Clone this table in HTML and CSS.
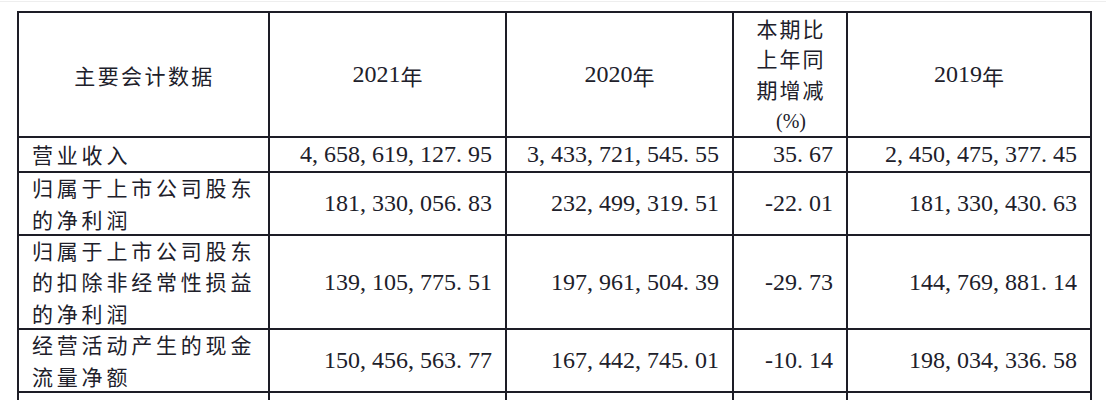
FILE: index.html
```html
<!DOCTYPE html>
<html lang="zh-CN">
<head>
<meta charset="utf-8">
<title>主要会计数据</title>
<link rel="stylesheet" href="styles.css">
</head>
<body>
<div class="page">
  <div class="sheet">
    <div class="c hd lab-hd">主要会计数据</div>
    <div class="c hd year">2021<span class="nian">年</span></div>
    <div class="c hd year">2020<span class="nian">年</span></div>
    <div class="c hd pct"><span>本期比<br>上年同<br>期增减<br><span class="pc">(%)</span></span></div>
    <div class="c hd year">2019<span class="nian">年</span></div>

    <div class="c lab">营业收入</div>
    <div class="c num">4<span class="p">,</span>658<span class="p">,</span>619<span class="p">,</span>127<span class="p">.</span>95</div>
    <div class="c num">3<span class="p">,</span>433<span class="p">,</span>721<span class="p">,</span>545<span class="p">.</span>55</div>
    <div class="c num">35<span class="p">.</span>67</div>
    <div class="c num">2<span class="p">,</span>450<span class="p">,</span>475<span class="p">,</span>377<span class="p">.</span>45</div>

    <div class="c lab">归属于上市公司股东<br>的净利润</div>
    <div class="c num">181<span class="p">,</span>330<span class="p">,</span>056<span class="p">.</span>83</div>
    <div class="c num">232<span class="p">,</span>499<span class="p">,</span>319<span class="p">.</span>51</div>
    <div class="c num"><span class="m">-</span>22<span class="p">.</span>01</div>
    <div class="c num">181<span class="p">,</span>330<span class="p">,</span>430<span class="p">.</span>63</div>

    <div class="c lab">归属于上市公司股东<br>的扣除非经常性损益<br>的净利润</div>
    <div class="c num">139<span class="p">,</span>105<span class="p">,</span>775<span class="p">.</span>51</div>
    <div class="c num">197<span class="p">,</span>961<span class="p">,</span>504<span class="p">.</span>39</div>
    <div class="c num"><span class="m">-</span>29<span class="p">.</span>73</div>
    <div class="c num">144<span class="p">,</span>769<span class="p">,</span>881<span class="p">.</span>14</div>

    <div class="c lab">经营活动产生的现金<br>流量净额</div>
    <div class="c num">150<span class="p">,</span>456<span class="p">,</span>563<span class="p">.</span>77</div>
    <div class="c num">167<span class="p">,</span>442<span class="p">,</span>745<span class="p">.</span>01</div>
    <div class="c num"><span class="m">-</span>10<span class="p">.</span>14</div>
    <div class="c num">198<span class="p">,</span>034<span class="p">,</span>336<span class="p">.</span>58</div>

    <div class="c tail"></div>
    <div class="c tail"></div>
    <div class="c tail"></div>
    <div class="c tail"></div>
    <div class="c tail"></div>
  </div>
</div>
</body>
</html>
```
FILE: styles.css
```css
html, body {
  margin: 0;
  padding: 0;
  background: #ffffff;
  height: 400px;
  overflow: hidden;
}

body {
  font-family: "Liberation Serif", "Noto Sans CJK SC", serif;
  color: #20202a;
}

.page {
  margin-top: 1px;
  border-top: 1px solid #eeeeee;
  padding: 9px 0 0 17px;
}

.sheet {
  display: grid;
  grid-template-columns: 251px 237px 227px 114px 244px;
  grid-template-rows: 125px 35px 63px 94px 63px 7px;
  width: max-content;
  border-left: 2px solid #1d1d26;
  border-top: 2px solid #1d1d26;
}

.c {
  display: flex;
  align-items: center;
  border-right: 2px solid #1d1d26;
  border-bottom: 2px solid #1d1d26;
  padding: 0 13px;
  box-sizing: border-box;
  white-space: nowrap;
}

.tail {
  border-bottom: 0;
}

.hd {
  justify-content: center;
  text-align: center;
}

.lab-hd {
  font-family: "Noto Sans CJK SC", sans-serif;
  font-size: 21px;
  letter-spacing: 2.4px;
  padding-left: 15px;
}

.year {
  font-size: 24px;
}

.nian {
  font-family: "Noto Sans CJK SC", sans-serif;
  font-size: 22px;
}

.pct {
  font-family: "Noto Sans CJK SC", sans-serif;
  font-size: 21px;
  line-height: 30.5px;
  letter-spacing: 2px;
  padding: 0 4px 0 6px;
}

.pc {
  font-family: "Liberation Serif", serif;
  font-size: 20px;
  letter-spacing: 0;
}

.lab {
  font-family: "Noto Sans CJK SC", sans-serif;
  font-size: 21px;
  letter-spacing: 3.8px;
  line-height: 31.5px;
}

.num {
  justify-content: flex-end;
  font-size: 24px;
  padding-right: 13px;
}

.p {
  display: inline-block;
  width: 12px;
  text-align: left;
}

.m {
  display: inline-block;
  width: 12px;
  text-align: right;
}
```
